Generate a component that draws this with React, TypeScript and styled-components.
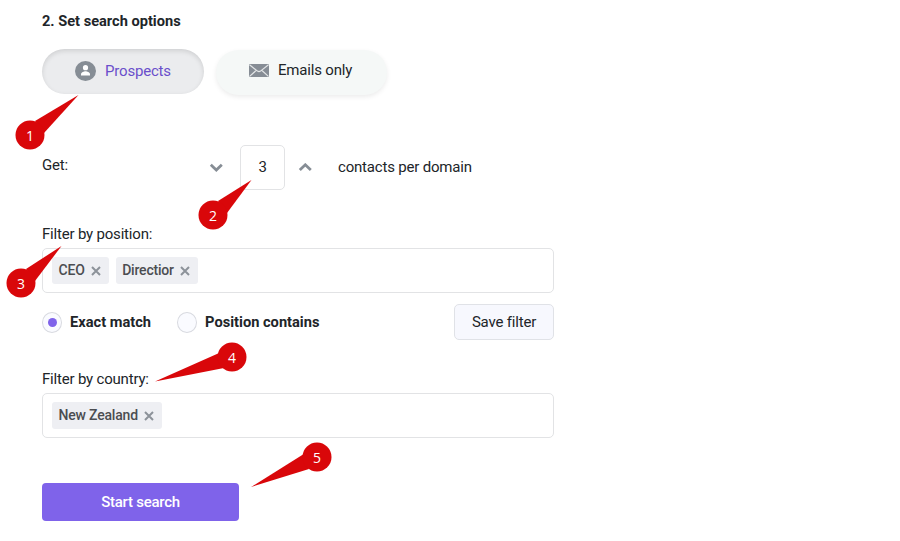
import React from "react";
import styled, { createGlobalStyle, css } from "styled-components";

const GlobalStyle = createGlobalStyle`
  * { box-sizing: border-box; }
  body {
    margin: 0;
    background: #fff;
    color: #212529;
    font-family: Roboto, "Liberation Sans", sans-serif;
    font-size: 15px;
    letter-spacing: -0.19px;
  }
`;

const Page = styled.main`
  position: relative;
  width: 900px;
  height: 541px;
  overflow: hidden;
  padding: 11px 0 0 42px;
`;

const Form = styled.form`
  display: flex;
  flex-direction: column;
  width: 512px;
`;

const Heading = styled.h2`
  margin: 0 0 18px;
  font-size: 14.6px;
  font-weight: 700;
  line-height: 20px;
  letter-spacing: 0;
`;

const ModeRow = styled.div`
  display: flex;
  gap: 12px;
  height: 46px;
`;

const ModeButton = styled.button<{ $active?: boolean }>`
  display: flex;
  align-items: center;
  height: 45px;
  border: 0;
  border-radius: 23px;
  font: inherit;
  line-height: 20px;
  letter-spacing: inherit;
  ${({ $active }) =>
    $active
      ? css`
          width: 162px;
          padding: 0 0 1px 33px;
          gap: 9px;
          color: #6a4fcb;
          background: #ebecee;
          box-shadow: inset 0 2px 5px rgba(0, 0, 0, 0.12);
        `
      : css`
          width: 171px;
          margin-top: 1px;
          padding: 0 0 5px 33px;
          gap: 9px;
          color: #212529;
          background: #f5f8f7;
          box-shadow: 0 2px 5px rgba(0, 0, 0, 0.08);
        `}
`;

const CountRow = styled.div`
  display: flex;
  align-items: center;
  height: 45px;
  margin-top: 50px;
`;

const CountLabel = styled.span`
  width: 167px;
  padding-bottom: 6px;
`;

const Stepper = styled.div`
  display: flex;
  align-items: center;
  margin-right: 25px;
`;

const CountBox = styled.div`
  display: flex;
  align-items: center;
  justify-content: center;
  width: 45px;
  height: 45px;
  margin: 0 13px 0 16px;
  padding-bottom: 2px;
  border: 1px solid #e2e3e5;
  border-radius: 5px;
`;

const Unit = styled.span`
  padding-bottom: 2px;
`;

const FieldLabel = styled.label<{ $top: number }>`
  margin-top: ${({ $top }) => $top}px;
  height: 24px;
  line-height: 20px;
`;

const TagField = styled.div`
  display: flex;
  align-items: center;
  gap: 7px;
  height: 45px;
  padding: 0 9px;
  border: 1px solid #e2e3e5;
  border-radius: 5px;
`;

const Tag = styled.span`
  display: flex;
  align-items: center;
  gap: 6px;
  height: 27px;
  padding: 0 8px 0 6.5px;
  border-radius: 3px;
  background: #eeeff3;
  color: #4b4d51;
  font-size: 14px;
  font-weight: 500;
`;

const TagText = styled.span`
  padding-bottom: 2px;
`;

const MatchRow = styled.div`
  display: flex;
  align-items: center;
  height: 36px;
  margin-top: 11px;
`;

const RadioLabel = styled.label`
  display: flex;
  align-items: center;
  gap: 8px;
  margin-right: 26px;
  font-size: 14.65px;
  font-weight: 700;
  letter-spacing: 0;
`;

const Radio = styled.span<{ $checked?: boolean }>`
  display: flex;
  align-items: center;
  width: 20px;
  height: 21px;
  padding-left: 4.5px;
  border: 1px solid #d8dae0;
  border-radius: 50%;
  background: #fafbff;

  &::after {
    content: "";
    width: 9px;
    height: 9px;
    border-radius: 50%;
    background: ${({ $checked }) => ($checked ? "#7f63ea" : "transparent")};
  }
`;

const SaveButton = styled.button`
  width: 100px;
  height: 36px;
  margin-left: auto;
  padding: 0;
  border: 1px solid #e0e2e7;
  border-radius: 5px;
  background: #f7f8fe;
  color: #212529;
  font: inherit;
  letter-spacing: inherit;
`;

const StartButton = styled.button`
  width: 197px;
  height: 38px;
  margin-top: 45px;
  padding: 0;
  border: 0;
  border-radius: 4px;
  background: #7f63ea;
  color: #fff;
  font: inherit;
  font-weight: 500;
  letter-spacing: -0.25px;
`;

const Marker = styled.svg<{ $x: number; $y: number }>`
  position: absolute;
  left: ${({ $x }) => $x}px;
  top: ${({ $y }) => $y}px;
  overflow: visible;
  pointer-events: none;
  fill: #d9070a;

  text {
    fill: #fff;
    font-family: "Open Sans", "Noto Sans", sans-serif;
    font-size: 14px;
    letter-spacing: 0;
    text-anchor: middle;
  }
`;

interface CalloutProps {
  n: number;
  x: number;
  y: number;
  tail: string;
}

const Callout = ({ n, x, y, tail }: CalloutProps) => (
  <Marker $x={x} $y={y} width="1" height="1">
    <polygon points={tail} />
    <circle r="14.5" />
    <text y="5.5">{n}</text>
  </Marker>
);

const callouts: CalloutProps[] = [
  { n: 1, x: 30, y: 135, tail: "5,-14 48.5,-40 14,-2" },
  { n: 2, x: 213, y: 215, tail: "5,-14 38.5,-35 14,-2" },
  { n: 3, x: 21, y: 283, tail: "5,-14 40.5,-37 14,-2" },
  { n: 4, x: 232, y: 357, tail: "-14,-3.5 -77,24.5 -8,11" },
  { n: 5, x: 317, y: 457, tail: "-14,-2.5 -66,30 -8,12" },
];

const UserIcon = () => (
  <svg width="21" height="20" viewBox="0 0 21 20">
    <ellipse cx="10.5" cy="10" rx="10.5" ry="10" fill="#868d95" />
    <circle cx="10.5" cy="6.7" r="2.6" fill="#fff" />
    <path d="M6 14.5v-1.2c0-2 3-3 4.5-3s4.5 1 4.5 3v1.2z" fill="#fff" />
  </svg>
);

const MailIcon = () => (
  <svg width="20" height="13" viewBox="0 0 20 13">
    <rect width="20" height="13" rx="1" fill="#868d95" />
    <path
      d="M.5.8 8.5 7.1q1.500 1.100 3 0L19.500.8M.6 12.400 7.300 6.300M19.400 12.400 12.700 6.300"
      fill="none"
      stroke="#e3e6e7"
      strokeWidth="1.2"
    />
  </svg>
);

const Chevron = ({ up }: { up?: boolean }) => (
  <svg width="15" height="10" viewBox="0 0 15 10">
    <path
      d={up ? "M1.8 7 7.3 1.8 12.8 7" : "M1.8 1.8 7.3 7 12.8 1.8"}
      fill="none"
      stroke="#868d95"
      strokeWidth="2.8"
    />
  </svg>
);

const CloseIcon = () => (
  <svg width="10" height="10" viewBox="0 0 10 10">
    <path d="M1 1l8 8M9 1 1 9" stroke="#8c9299" strokeWidth="2" />
  </svg>
);

const FilterTag = ({ text }: { text: string }) => (
  <Tag>
    <TagText>{text}</TagText>
    <CloseIcon />
  </Tag>
);

export default function App() {
  return (
    <Page>
      <GlobalStyle />
      <Form>
        <Heading>2. Set search options</Heading>
        <ModeRow>
          <ModeButton type="button" $active>
            <UserIcon />
            Prospects
          </ModeButton>
          <ModeButton type="button">
            <MailIcon />
            Emails only
          </ModeButton>
        </ModeRow>
        <CountRow>
          <CountLabel>Get:</CountLabel>
          <Stepper>
            <Chevron />
            <CountBox>3</CountBox>
            <Chevron up />
          </Stepper>
          <Unit>contacts per domain</Unit>
        </CountRow>
        <FieldLabel $top={34}>Filter by position:</FieldLabel>
        <TagField>
          <FilterTag text="CEO" />
          <FilterTag text="Directior" />
        </TagField>
        <MatchRow>
          <RadioLabel>
            <Radio $checked />
            Exact match
          </RadioLabel>
          <RadioLabel>
            <Radio />
            Position contains
          </RadioLabel>
          <SaveButton type="button">Save filter</SaveButton>
        </MatchRow>
        <FieldLabel $top={29}>Filter by country:</FieldLabel>
        <TagField>
          <FilterTag text="New Zealand" />
        </TagField>
        <StartButton type="button">Start search</StartButton>
      </Form>
      {callouts.map((callout) => (
        <Callout key={callout.n} {...callout} />
      ))}
    </Page>
  );
}
